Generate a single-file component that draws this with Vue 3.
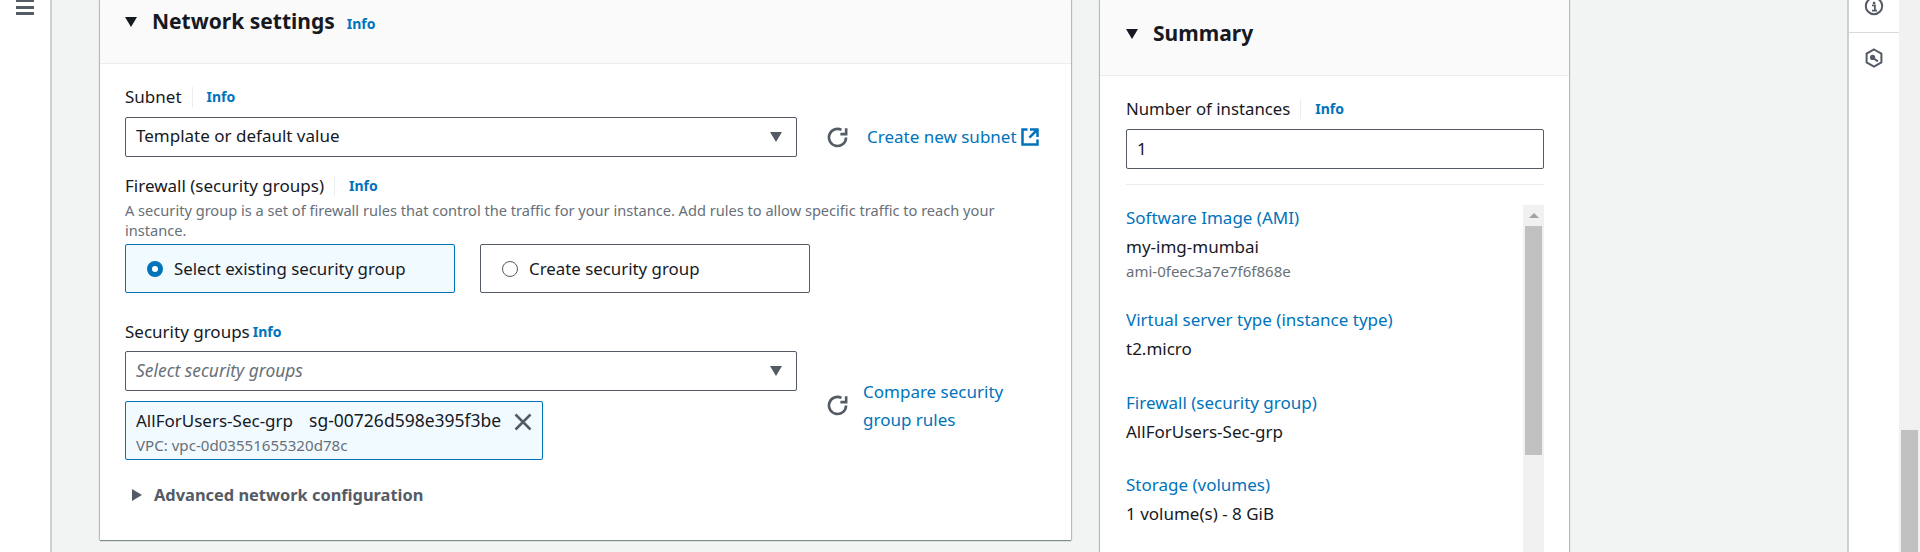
<template>
  <div class="page">
    <nav class="side-nav">
      <div class="burger"><i></i><i></i><i></i></div>
    </nav>

    <main class="content">
      <section class="card network">
        <header class="card-head net-head">
          <span class="caret-down"></span>
          <h2>Network settings</h2>
          <a class="info head-info">Info</a>
        </header>
        <div class="card-body">
          <div class="label">
            <span class="label-text">Subnet</span>
            <span class="sep"></span>
            <a class="info">Info</a>
          </div>
          <div class="row subnet-row">
            <div class="select">
              <span class="select-text">Template or default value</span>
              <span class="select-arrow"></span>
            </div>
            <svg class="refresh" viewBox="0 0 16 16"><path d="M14.5 8A6.5 6.5 0 1 1 11 2.2" /><path d="M14.6 1v4.4h-4.4" /></svg>
            <a class="link subnet-link">Create new subnet</a>
            <svg class="external" viewBox="0 0 16 16"><path d="M14 8V2H8M14 2 7.5 8.5M6 2H2v12h12v-4" /></svg>
          </div>

          <div class="label firewall-label">
            <span class="label-text">Firewall (security groups)</span>
            <span class="sep"></span>
            <a class="info">Info</a>
          </div>
          <p class="desc">A security group is a set of firewall rules that control the traffic for your instance. Add rules to allow specific traffic to reach your instance.</p>
          <div class="tiles">
            <div class="tile tile--on">
              <span class="radio radio--on"></span>
              <span class="tile-text">Select existing security group</span>
            </div>
            <div class="tile">
              <span class="radio"></span>
              <span class="tile-text">Create security group</span>
            </div>
          </div>

          <div class="label groups-label">
            <span class="label-text">Security groups</span>
            <a class="info groups-info">Info</a>
          </div>
          <div class="row groups-row">
            <div class="groups-col">
              <div class="select">
                <em class="select-text">Select security groups</em>
                <span class="select-arrow"></span>
              </div>
              <div class="token">
                <div class="token-text">
                  <div><span class="token-name">AllForUsers-Sec-grp</span><span class="token-id">sg-00726d598e395f3be</span></div>
                  <div class="token-sub">VPC: vpc-0d03551655320d78c</div>
                </div>
                <svg class="dismiss" viewBox="0 0 16 16"><path d="m2 2 12 12M14 2 2 14" /></svg>
              </div>
            </div>
            <svg class="refresh" viewBox="0 0 16 16"><path d="M14.5 8A6.5 6.5 0 1 1 11 2.2" /><path d="M14.6 1v4.4h-4.4" /></svg>
            <a class="link compare-link">Compare security group rules</a>
          </div>

          <div class="advanced">
            <span class="caret-right"></span>
            <span>Advanced network configuration</span>
          </div>
        </div>
      </section>

      <aside class="card summary">
        <header class="card-head sum-head">
          <span class="caret-down"></span>
          <h2>Summary</h2>
        </header>
        <div class="sum-body">
          <div class="label sum-label">
            <span class="label-text">Number of instances</span>
            <span class="sep"></span>
            <a class="info">Info</a>
          </div>
          <div class="count-input">1</div>
          <div class="sum-rule"></div>
          <div class="sum-scroll">
            <div class="sum-list">
              <div v-for="item in summaryItems" :key="item.title" class="sum-item">
                <a class="link">{{ item.title }}</a>
                <div class="sum-value">{{ item.value }}</div>
                <div v-if="item.sub" class="sum-sub">{{ item.sub }}</div>
              </div>
            </div>
            <div class="mini-bar">
              <span class="mini-up"></span>
              <span class="mini-thumb"></span>
            </div>
          </div>
        </div>
      </aside>
    </main>

    <div class="rail">
      <div class="rail-top">
        <svg class="rail-info" viewBox="0 0 20 20">
          <circle cx="10" cy="6" r="8.2" />
          <rect x="8.9" y="1.8" width="2.4" height="2.2" class="fill" />
          <path d="M8 5.4h2.9v5.2M8 10.6h5" class="thin" />
        </svg>
      </div>
      <div class="rail-bottom">
        <svg class="rail-hex" viewBox="0 0 20 20">
          <path d="M10 1.5 17.4 5.7v8.6L10 18.5 2.6 14.3V5.7Z" />
          <circle cx="8.6" cy="9.4" r="2.6" class="fill" />
          <path d="m9.5 10.2 4.4 3.2" />
        </svg>
      </div>
    </div>
    <div class="page-bar"><span class="page-thumb"></span></div>
  </div>
</template>

<script setup>
const summaryItems = [
  { title: 'Software Image (AMI)', value: 'my-img-mumbai', sub: 'ami-0feec3a7e7f6f868e' },
  { title: 'Virtual server type (instance type)', value: 't2.micro' },
  { title: 'Firewall (security group)', value: 'AllForUsers-Sec-grp' },
  { title: 'Storage (volumes)', value: '1 volume(s) - 8 GiB' },
];
</script>

<style>
html, body { margin: 0; overflow: hidden; }
</style>

<style scoped>
.page {
  display: flex;
  width: 1920px;
  height: 552px;
  overflow: hidden;
  background: #f2f3f3;
  color: #16191f;
  font-family: "Noto Sans", "Open Sans", sans-serif;
  font-size: 17px;
  line-height: 20px;
}

.side-nav {
  flex: none;
  width: 50px;
  background: #fff;
  border-right: 2px solid #cbd0d3;
}

.burger {
  display: flex;
  flex-direction: column;
  gap: 3.5px;
  width: 18px;
  margin: -1px 0 0 16px;
}

.burger i {
  display: block;
  height: 3px;
  background: #545b64;
}

.content {
  flex: 1;
  display: flex;
  align-items: flex-start;
  gap: 29px;
  padding-left: 48px;
}

.card {
  background: #fff;
  box-shadow: 0 1px 1px rgba(0, 28, 36, 0.45), 1px 0 1px rgba(0, 28, 36, 0.2), -1px 0 1px rgba(0, 28, 36, 0.2);
}

.network {
  width: 971px;
  height: 540px;
}

.summary {
  width: 469px;
  height: 552px;
}

.card-head {
  display: flex;
  background: #fafafa;
  border-bottom: 1px solid #eaeded;
  box-sizing: border-box;
  padding-left: 25px;
}

.net-head {
  height: 64px;
  padding-top: 8px;
}

.sum-head {
  height: 76px;
  padding-top: 20px;
  padding-left: 26px;
}

.card-head h2 {
  margin: 0 0 0 15px;
  font-size: 21px;
  line-height: 26px;
  font-weight: 700;
}

.caret-down {
  width: 0;
  height: 0;
  margin-top: 9px;
  border-left: 6px solid transparent;
  border-right: 6px solid transparent;
  border-top: 10px solid #16191f;
}

.info {
  color: #0073bb;
  font-size: 14px;
  font-weight: 700;
}

.head-info {
  margin: 6px 0 0 12px;
}

.card-body {
  padding: 23px 25px 0;
}

.label {
  display: flex;
  align-items: center;
  height: 20px;
}

.sum-label .label-text {
  font-size: 16.8px;
}

.sep {
  width: 1px;
  height: 20px;
  margin: 0 14px 0 10px;
  background: #eaeded;
}

.select {
  display: flex;
  align-items: center;
  justify-content: space-between;
  box-sizing: border-box;
  width: 672px;
  height: 40px;
  padding: 0 14px 0 10px;
  background: #fff;
  border: 1px solid #545b64;
  border-radius: 2px;
}

.select-text {
  margin-bottom: 2px;
}

.select em {
  color: #687078;
  font-size: 17.4px;
}

.select-arrow {
  width: 0;
  height: 0;
  border-left: 6.5px solid transparent;
  border-right: 6.5px solid transparent;
  border-top: 10px solid #545b64;
}

.row {
  display: flex;
  align-items: center;
}

.subnet-row {
  margin-top: 10px;
}

.refresh {
  flex: none;
  width: 21px;
  height: 21px;
  margin-left: 30px;
  fill: none;
  stroke: #545b64;
  stroke-width: 2;
}

.link {
  color: #0073bb;
}

.subnet-link {
  margin-left: 19px;
}

.external {
  width: 20px;
  height: 20px;
  margin-left: 3px;
  fill: none;
  stroke: #0073bb;
  stroke-width: 2;
}

.firewall-label {
  margin-top: 19px;
}

.desc {
  margin: 4px 0 0;
  font-size: 14.6px;
  color: #687078;
}

.tiles {
  display: flex;
  gap: 25px;
  margin-top: 4px;
}

.tile {
  display: flex;
  align-items: center;
  gap: 11px;
  box-sizing: border-box;
  width: 330px;
  height: 49px;
  padding-left: 21px;
  border: 1px solid #545b64;
  border-radius: 2px;
}

.tile-text {
  font-size: 16.85px;
}

.tile--on {
  background: #f1faff;
  border-color: #0073bb;
}

.radio {
  box-sizing: border-box;
  width: 16px;
  height: 16px;
  border: 1px solid #545b64;
  border-radius: 50%;
  background: #fff;
}

.radio--on {
  border: 5px solid #0073bb;
}

.groups-label {
  margin-top: 29px;
}

.groups-info {
  margin-left: 3px;
}

.groups-row {
  margin-top: 9px;
}

.groups-col {
  width: 672px;
}

.token {
  display: flex;
  box-sizing: border-box;
  width: 418px;
  height: 59px;
  margin-top: 10px;
  padding: 8px 0 0 10px;
  background: #f1faff;
  border: 1px solid #0073bb;
  border-radius: 2px;
}

.token-name {
  margin-right: 16px;
}

.token-id {
  font-size: 17.5px;
}

.token-text {
  flex: 1;
  white-space: nowrap;
}

.token-sub {
  margin-top: 4px;
  font-size: 15.1px;
  color: #687078;
}

.dismiss {
  flex: none;
  width: 20px;
  height: 20px;
  margin: 2px 9px 0 0;
  fill: none;
  stroke: #545b64;
  stroke-width: 2;
}

.compare-link {
  width: 160px;
  margin-left: 15px;
  line-height: 28px;
}

.advanced {
  display: flex;
  align-items: center;
  gap: 12px;
  margin-top: 25px;
  padding-left: 7px;
  color: #545b64;
  font-size: 16.4px;
  font-weight: 700;
}

.caret-right {
  width: 0;
  height: 0;
  border-top: 6.5px solid transparent;
  border-bottom: 6.5px solid transparent;
  border-left: 10px solid #545b64;
}

.sum-body {
  padding: 23px 25px 0 26px;
}

.count-input {
  box-sizing: border-box;
  height: 40px;
  margin-top: 10px;
  padding: 9px 10px;
  border: 1px solid #545b64;
  border-radius: 2px;
}

.sum-rule {
  height: 1px;
  margin-top: 15px;
  background: #eaeded;
}

.sum-scroll {
  display: flex;
  height: 347px;
  margin-top: 20px;
}

.sum-list {
  flex: 1;
  padding-top: 3px;
}

.sum-item {
  height: 82.5px;
}

.sum-item:first-child {
  height: 102px;
}

.sum-value {
  margin-top: 9px;
}

.sum-sub {
  margin-top: 4px;
  font-size: 15px;
  color: #687078;
}

.mini-bar {
  display: flex;
  flex-direction: column;
  align-items: center;
  width: 21px;
  background: #f1f1f1;
}

.mini-up {
  margin-top: 8px;
  width: 0;
  height: 0;
  border-left: 5px solid transparent;
  border-right: 5px solid transparent;
  border-bottom: 5px solid #a3a3a3;
}

.mini-thumb {
  width: 17px;
  height: 229px;
  margin-top: 8px;
  background: #c1c1c1;
}

.rail {
  flex: none;
  width: 50px;
  background: #fff;
  border-left: 2px solid #cbd0d3;
}

.rail-top {
  display: flex;
  justify-content: center;
  height: 32px;
  border-bottom: 1px solid #d5dbdb;
}

.rail-info {
  width: 20px;
  height: 20px;
  fill: none;
  stroke: #545b64;
  stroke-width: 2;
}

.rail-info .thin {
  stroke-width: 1.8;
}

.fill {
  fill: #545b64;
  stroke: none;
}

.rail-bottom {
  display: flex;
  justify-content: center;
  padding-top: 15px;
}

.rail-hex {
  width: 20px;
  height: 20px;
  fill: none;
  stroke: #545b64;
  stroke-width: 2;
}

.page-bar {
  flex: none;
  display: flex;
  justify-content: center;
  width: 21px;
  background: #f1f1f1;
}

.page-thumb {
  width: 17px;
  height: 122px;
  margin-top: 430px;
  background: #c1c1c1;
}
</style>
